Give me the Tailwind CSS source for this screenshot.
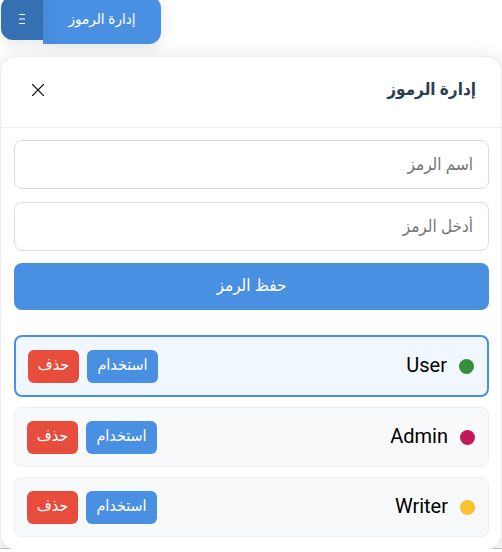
<!DOCTYPE html>
<html lang="ar" dir="rtl">
<head>
<meta charset="utf-8">
<meta name="viewport" content="width=device-width, initial-scale=1">
<title>إدارة الرموز</title>
<script src="https://cdn.jsdelivr.net/npm/@tailwindcss/browser@4"></script>
</head>
<body class="overflow-hidden bg-white font-['Roboto','DejaVu_Sans_Condensed','DejaVu_Sans',sans-serif] text-black">
<div class="-mt-1 flex items-start justify-end px-px">
  <button type="button" class="h-12 min-w-[118px] rounded-s-xl bg-[#4a90e2] px-6 pb-0.5 text-[15px] font-medium text-white shadow-[0_4px_15px_rgba(0,0,0,0.1)]">إدارة الرموز</button>
  <button type="button" aria-label="القائمة" class="flex h-11 w-[42px] items-center justify-center rounded-e-xl bg-[#3570b2] pt-0.5 text-white shadow-[0_4px_15px_rgba(0,0,0,0.1)]">
    <svg class="h-3 w-2" viewBox="0 0 8 12" aria-hidden="true"><path d="M1 1.5h6M1 6h6M1 10.5h6" stroke="currentColor" stroke-width="1.2"/></svg>
  </button>
</div>
<main class="relative z-10 mt-3 rounded-2xl border border-[#eeeeee] bg-white shadow-[0_4px_20px_rgba(0,0,0,0.15)]">
  <header class="flex h-[71px] items-center justify-between border-b border-[#eeeeee] px-[25px] pb-1">
    <h1 class="text-[17px] font-bold text-[#2c3e50]">إدارة الرموز</h1>
    <button type="button" aria-label="إغلاق" class="flex size-6 items-center justify-center">
      <svg class="size-3" viewBox="0 0 12 12" aria-hidden="true"><path d="M0 0L12 12M12 0L0 12" stroke="currentColor" stroke-width="1.2"/></svg>
    </button>
  </header>
  <div class="py-3 ps-3 pe-[13px]">
    <form class="flex flex-col gap-3">
      <div class="flex flex-col gap-[13px]">
        <input type="text" aria-label="اسم الرمز" placeholder="اسم الرمز" class="h-[49px] w-full rounded-lg border border-[#dddddd] px-[15px] pb-0.5 text-[17px] placeholder:text-[#757575]">
        <input type="text" aria-label="أدخل الرمز" placeholder="أدخل الرمز" class="h-[49px] w-full rounded-lg border border-[#dddddd] px-[15px] pb-0.5 text-[17px] placeholder:text-[#757575]">
      </div>
      <button type="button" class="h-[47px] w-full rounded-lg bg-[#4a90e2] pb-0.5 text-[17px] font-medium text-white">حفظ الرمز</button>
    </form>
    <ul class="mt-[25px] flex flex-col gap-[10px]">
      <li class="flex h-[62px] items-center justify-between rounded-lg border-2 border-[#4a90e2] bg-[#f0f7ff] ps-[13px] pe-3">
        <div class="flex items-center gap-3"><span class="size-[15px] rounded-full bg-[#388e3c]"></span><span class="pb-0.5 text-xl">User</span></div>
        <div class="flex gap-2">
          <button type="button" class="h-[33px] w-[71px] rounded-md bg-[#4a90e2] pb-0.5 text-base text-white">استخدام</button>
          <button type="button" class="h-[33px] w-[51px] rounded-md bg-[#e74c3c] pb-0.5 text-base text-white">حذف</button>
        </div>
      </li>
      <li class="flex h-[60px] items-center justify-between rounded-lg border border-[#eeeeee] bg-[#f8f9fa] ps-[13px] pe-3">
        <div class="flex items-center gap-3"><span class="size-[15px] rounded-full bg-[#c2185b]"></span><span class="pb-0.5 text-xl">Admin</span></div>
        <div class="flex gap-2">
          <button type="button" class="h-[33px] w-[71px] rounded-md bg-[#4a90e2] pb-0.5 text-base text-white">استخدام</button>
          <button type="button" class="h-[33px] w-[51px] rounded-md bg-[#e74c3c] pb-0.5 text-base text-white">حذف</button>
        </div>
      </li>
      <li class="flex h-[60px] items-center justify-between rounded-lg border border-[#eeeeee] bg-[#f8f9fa] ps-[13px] pe-3">
        <div class="flex items-center gap-3"><span class="size-[15px] rounded-full bg-[#fbc02d]"></span><span class="pb-0.5 text-xl">Writer</span></div>
        <div class="flex gap-2">
          <button type="button" class="h-[33px] w-[71px] rounded-md bg-[#4a90e2] pb-0.5 text-base text-white">استخدام</button>
          <button type="button" class="h-[33px] w-[51px] rounded-md bg-[#e74c3c] pb-0.5 text-base text-white">حذف</button>
        </div>
      </li>
    </ul>
  </div>
</main>
<hr class="-mt-0.5 border-[#cccccc]">
</body>
</html>
